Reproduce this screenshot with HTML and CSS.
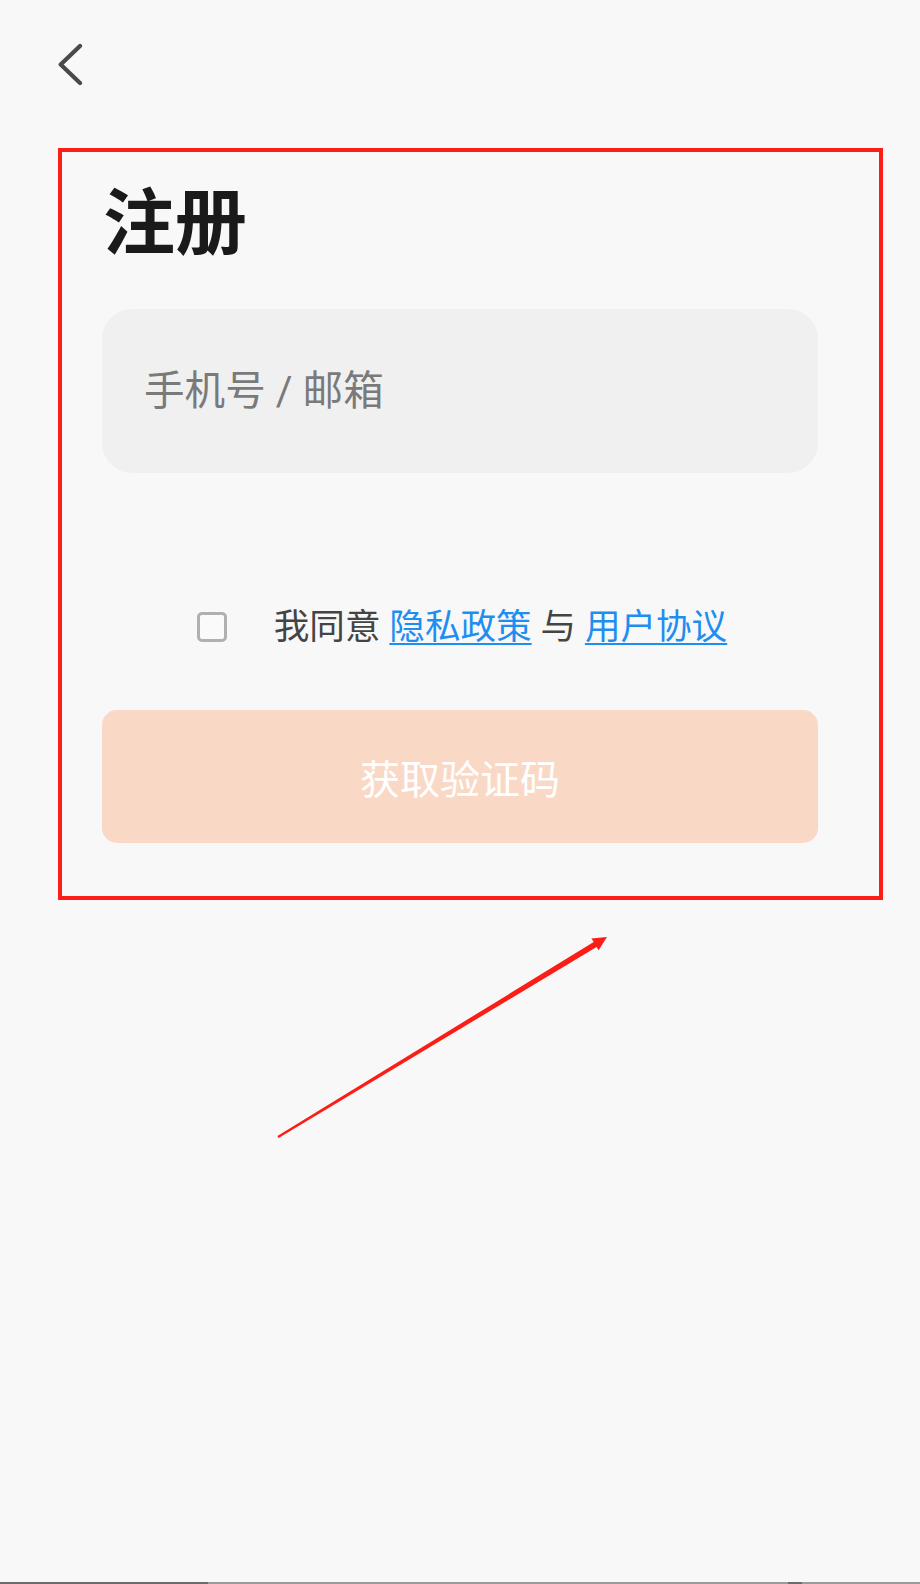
FILE: index.html
```html
<!DOCTYPE html>
<html lang="zh-CN">
<head>
  <meta charset="UTF-8" />
  <meta name="viewport" content="width=device-width, initial-scale=1" />
  <title>注册</title>
  <link rel="stylesheet" href="styles.css">
</head>
<body>

  <div class="page">

    <!-- Topo: voltar -->
    <div class="topbar">
      <button class="back" aria-label="返回">
        <svg width="30" height="46" viewBox="0 0 30 46">
          <polyline points="22,4 2.7,22.5 22,41" fill="none" stroke="#4a4a4a" stroke-width="4.2" stroke-linecap="round" stroke-linejoin="round" />
        </svg>
      </button>
    </div>

    <!-- Formulário (marcado em vermelho) -->
    <div class="frame">
      <h1 class="title">注册</h1>

      <input class="account" type="text" placeholder="手机号 / 邮箱" />

      <label class="agree">
        <span class="check"></span>
        <span class="agree-text">我同意 <a href="#">隐私政策</a> 与 <a href="#">用户协议</a></span>
      </label>

      <button class="submit" disabled>获取验证码</button>
    </div>

    <div class="bottom-bar"></div>
  </div>

  <!-- seta de anotação -->
  <svg class="arrow" width="345" height="220" viewBox="0 0 345 220">
    <polygon fill="#fa1e16" points="7.4,210.9 323.7,17.1 321.4,13.4 337,12 328.6,25.2 326.6,21.9 8.6,213.1" />
  </svg>

</body>
</html>
```

FILE: styles.css
```css
/* Reset básico */
* {
  margin: 0;
  padding: 0;
  box-sizing: border-box;
}
body {
  font-family: Roboto, "Noto Sans CJK SC", "Noto Sans", sans-serif;
  background-color: #f8f8f8;
  color: #444;
}

.page {
  position: relative;
  height: 1584px;
  display: flex;
  flex-direction: column;
}

/* --- Topo --- */
.topbar {
  height: 148px;
  padding: 42px 0 0 58px;
}
.back {
  background: none;
  border: none;
  display: block;
  cursor: pointer;
}
.back svg {
  display: block;
}

/* --- Moldura vermelha --- */
.frame {
  margin-left: 58px;
  width: 825px;
  height: 752px;
  border: 4px solid #fa1e16;
  padding: 0 61px 0 40px;
  display: flex;
  flex-direction: column;
}

.title {
  font-size: 72px;
  font-weight: 700;
  line-height: 72px;
  color: #1a1a1a;
  margin-top: 36px;
  margin-left: 1px;
}

.account {
  margin-top: 49px;
  height: 164px;
  width: 100%;
  border: none;
  outline: none;
  border-radius: 30px;
  background: #f0f0f0;
  padding: 0 42px;
  font-family: inherit;
  font-size: 40.6px;
  color: #333;
}
.account::placeholder {
  color: #7a7a7a;
}

/* --- Aceite --- */
.agree {
  margin-top: 129px;
  display: flex;
  align-items: center;
  justify-content: center;
  gap: 47px;
  height: 50px;
  padding-left: 4px;
}
.check {
  width: 30px;
  height: 30px;
  border: 3px solid #b0b0b0;
  border-radius: 5px;
  background: #fafafa;
}
.agree-text {
  font-size: 35.6px;
  color: #444;
  line-height: 50px;
}
.agree-text a {
  color: #1f8ef1;
  text-decoration: underline;
  text-underline-offset: 4px;
  text-decoration-thickness: 2px;
}

/* --- Botão --- */
.submit {
  margin-top: 58px;
  height: 133px;
  width: 100%;
  border: none;
  border-radius: 15px;
  background: #f9d9c6;
  color: #fff;
  font-family: inherit;
  font-size: 40px;
}

.bottom-bar {
  margin-top: auto;
  height: 2px;
  background: linear-gradient(to right, #6b6b6b 0 208px, #9a9a9a 208px 788px, #6b6b6b 788px 802px, #9a9a9a 802px);
}

.arrow {
  position: absolute;
  left: 270px;
  top: 925px;
}
```
